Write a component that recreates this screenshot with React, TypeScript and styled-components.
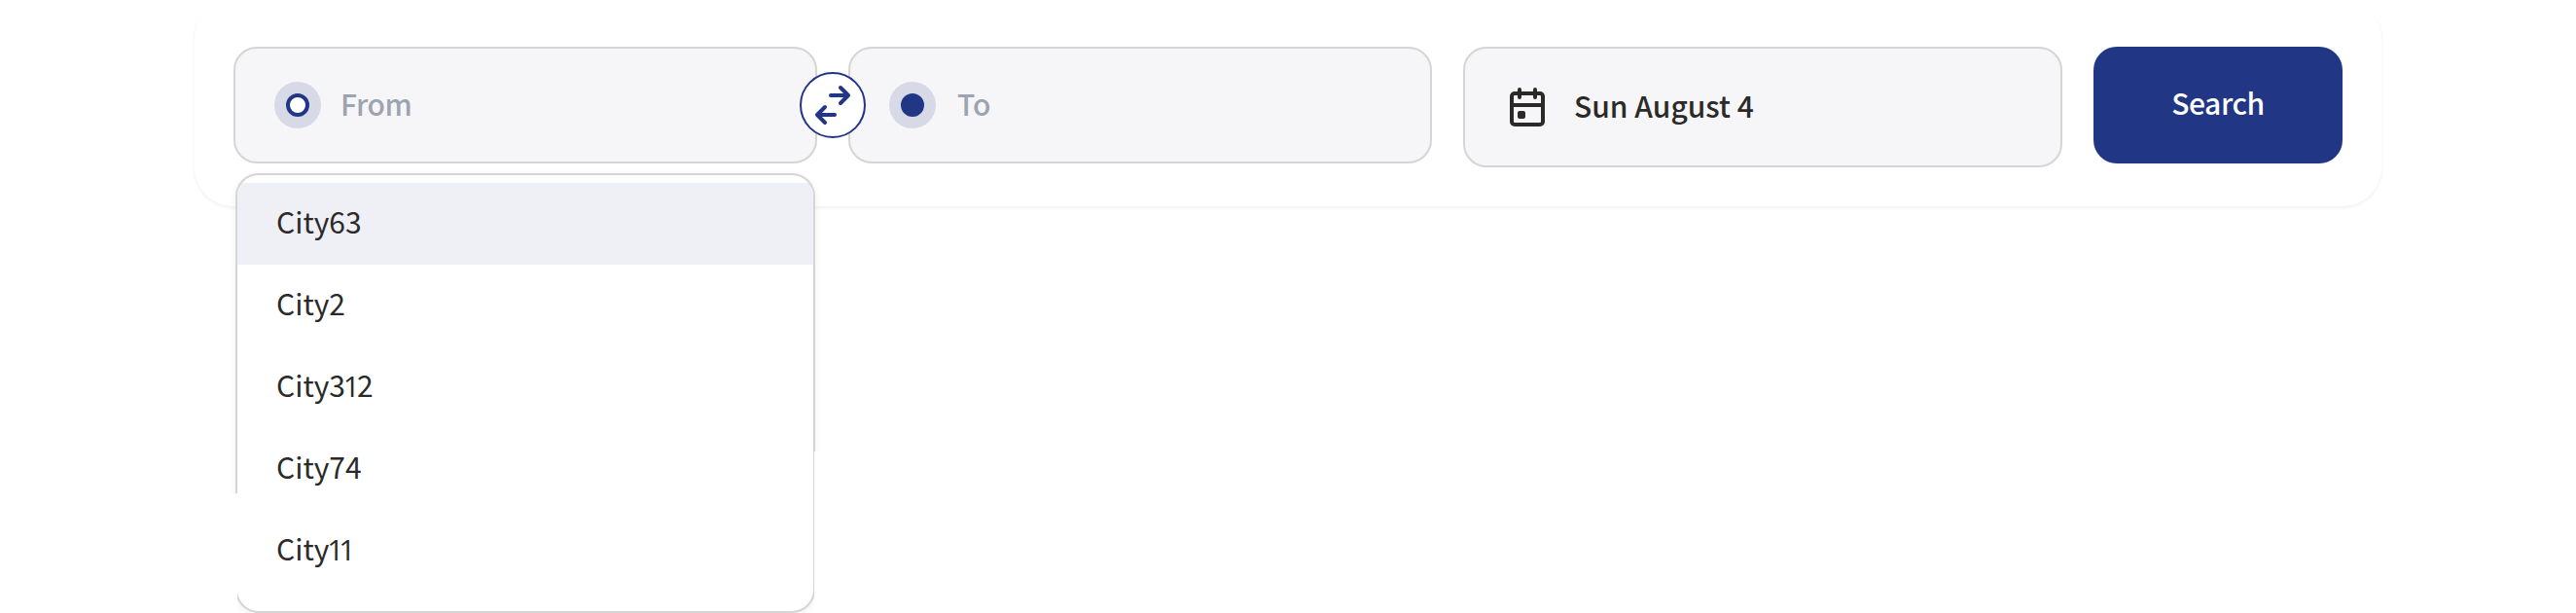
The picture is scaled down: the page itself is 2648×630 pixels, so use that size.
import React from "react";
import styled, { createGlobalStyle } from "styled-components";

const navy = "#213684";
const ink = "#2b2a29";
const surface = "#ffffff";

const GlobalStyle = createGlobalStyle`
  *, *::before, *::after { box-sizing: border-box; }
  body {
    margin: 0;
    background: ${surface};
    font-family: "Noto Sans CJK SC", "Open Sans", sans-serif;
    overflow: hidden;
  }
`;

const Page = styled.main`
  height: 630px;
  padding: 0 200px;
  overflow: hidden;
`;

const SearchCard = styled.form`
  display: flex;
  align-items: flex-start;
  gap: 32px;
  height: 212px;
  padding: 48px 40px 0;
  border-radius: 40px;
  background: ${surface};
  box-shadow: 0 2px 4px rgba(0, 0, 0, 0.06);
`;

const Field = styled.div<{ $width: number; $height?: number; $gap?: number }>`
  position: relative;
  display: flex;
  align-items: center;
  gap: ${(p) => p.$gap ?? 20}px;
  width: ${(p) => p.$width}px;
  height: ${(p) => p.$height ?? 120}px;
  padding: 0 40px;
  border: 2px solid #d5d5d6;
  border-radius: 24px;
  background: #f6f6f9;
`;

const Halo = styled.span`
  display: grid;
  place-items: center;
  width: 48px;
  height: 48px;
  border-radius: 50%;
  background: #d8d9e6;
`;

const Dot = styled.span<{ $filled?: boolean }>`
  width: 24px;
  height: 24px;
  border: 4px solid ${navy};
  border-radius: 50%;
  background: ${(p) => (p.$filled ? navy : "#fff")};
`;

const Label = styled.span<{ $color: string; $spacing?: number; $weight?: number; $lift?: number }>`
  display: block;
  margin-bottom: ${(p) => (p.$lift ?? 2) * 2}px;
  font-size: 30px;
  line-height: 42px;
  font-weight: ${(p) => p.$weight ?? 500};
  letter-spacing: ${(p) => p.$spacing ?? 0}px;
  color: ${(p) => p.$color};
  white-space: nowrap;
`;

/* A narrow figure one without a foot serif */
const One = styled.span`
  margin: 0 -3px 0 -2.2px;
  font-family: "Open Sans", sans-serif;
  line-height: 1;
`;

const SwapButton = styled.button`
  position: absolute;
  top: 24px;
  right: -52px;
  z-index: 1;
  display: grid;
  place-items: center;
  width: 68px;
  height: 68px;
  padding: 0;
  border: 2px solid ${navy};
  border-radius: 50%;
  background: #fff;
`;

const SubmitButton = styled.button`
  display: flex;
  align-items: center;
  justify-content: center;
  width: 256px;
  height: 120px;
  padding: 0;
  border: 0;
  border-radius: 24px;
  background: ${navy};
  font-family: inherit;
`;

const Menu = styled.ul`
  position: absolute;
  top: 128px;
  left: 0;
  width: 596px;
  height: 452px;
  margin: 0;
  padding: 8px 0 0;
  border: 2px solid #d5d5d6;
  border-radius: 24px;
  background: ${surface};
  box-shadow: 0 2px 8px rgba(0, 0, 0, 0.06);
  list-style: none;
  overflow: hidden;
`;

const Option = styled.li<{ $active?: boolean }>`
  display: flex;
  align-items: center;
  height: 84px;
  padding: 0 40px;
  background: ${(p) => (p.$active ? "#eff0f6" : "transparent")};
`;

const EdgeCover = styled.span<{ $left: number; $top: number; $height: number; $width: number }>`
  position: absolute;
  left: ${(p) => p.$left}px;
  top: ${(p) => p.$top}px;
  width: ${(p) => p.$width}px;
  height: ${(p) => p.$height}px;
  background: ${surface};
`;

const SwapIcon = () => (
  <svg width="48" height="48" viewBox="0 0 48 48" fill="none" stroke={navy} strokeWidth="4" strokeLinecap="round" strokeLinejoin="round">
    <path d="M22 14H40M32 6L40 14L32 22M26 34H8M16 26L8 34L16 42" />
  </svg>
);

const CalendarIcon = () => (
  <svg width="48" height="48" viewBox="0 0 24 24" fill="none" stroke={ink} strokeWidth="2" strokeLinecap="round">
    <rect x="4" y="5" width="16" height="16" rx="1.5" />
    <path d="M4 11H20M8 3V7M16 3V7" />
    <rect x="7" y="14" width="4" height="4" rx="1" fill={ink} stroke="none" />
  </svg>
);

const cities = ["City63", "City2", "City312", "City74", "City11"];

const CityName = ({ name }: { name: string }) => (
  <Label $color={ink} $weight={400} $lift={3.5}>
    {name.split(/(1)/).filter(Boolean).map((part, i) =>
      part === "1" ? <One key={i}>1</One> : part
    )}
  </Label>
);

export default function App() {
  return (
    <>
      <GlobalStyle />
      <Page>
        <SearchCard>
          <Field $width={600}>
            <Halo><Dot /></Halo>
            <Label $color="#9da3b0" $spacing={-0.4}>From</Label>
            <SwapButton type="button" aria-label="Swap"><SwapIcon /></SwapButton>
            <Menu>
              {cities.map((name, i) => (
                <Option key={name} $active={i === 0}>
                  <CityName name={name} />
                </Option>
              ))}
            </Menu>
            <EdgeCover $left={-10} $top={457} $width={12} $height={123} />
            <EdgeCover $left={595} $top={414} $width={12} $height={166} />
          </Field>
          <Field $width={600} $gap={22}>
            <Halo><Dot $filled /></Halo>
            <Label $color="#9da3b0">To</Label>
          </Field>
          <Field $width={616} $height={124} $gap={24}>
            <CalendarIcon />
            <Label $color={ink} $lift={2.5}>Sun August 4</Label>
          </Field>
          <SubmitButton type="button"><Label $color="#fff" $spacing={-0.4} $lift={3}>Search</Label></SubmitButton>
        </SearchCard>
      </Page>
    </>
  );
}
